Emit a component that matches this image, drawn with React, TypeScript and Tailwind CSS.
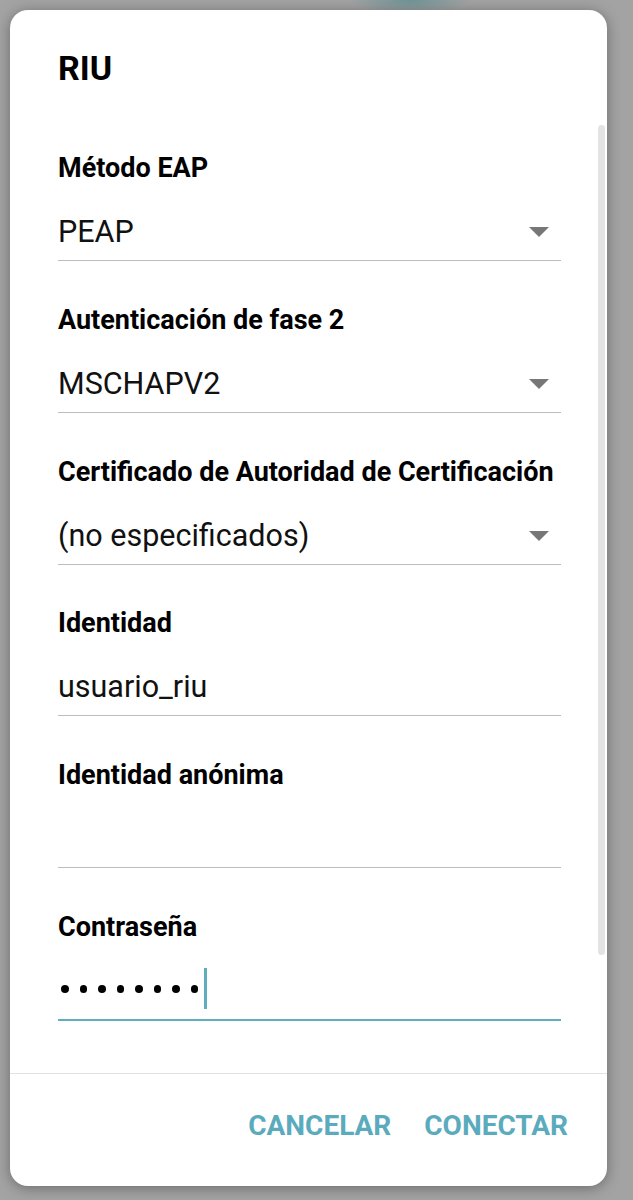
// Diálogo de conexión Wi-Fi EAP (RIU)
const font = { fontFamily: 'Roboto, "Noto Sans", sans-serif' };

type FieldProps = {
  label: string;
  value?: string;
  dropdown?: boolean;
};

function Caret() {
  return (
    <svg width="20" height="10" viewBox="0 0 20 10" className="shrink-0">
      <path d="M0 0h20L10 10z" fill="#777" />
    </svg>
  );
}

function Field({ label, value, dropdown }: FieldProps) {
  return (
    <div className="border-b border-[#bdbdbd]">
      <div className="h-[32px] text-[27px] leading-[32px] font-bold text-black">{label}</div>
      <div className="mt-[28px] mb-[8px] flex h-[40px] items-center justify-between">
        <span className="text-[30.5px] leading-[40px] text-[#111]">{value}</span>
        {dropdown && (
          <span className="mr-[12px]">
            <Caret />
          </span>
        )}
      </div>
    </div>
  );
}

function PasswordField() {
  return (
    <div className="border-b-2 border-[#5eaebf]">
      <div className="h-[32px] text-[27px] leading-[32px] font-bold text-black">Contraseña</div>
      <div className="mt-[25px] mb-[9px] flex h-[42px] items-center pl-[3px]">
        <div className="flex items-center gap-[11px]">
          {Array.from({ length: 8 }).map((_, i) => (
            <span key={i} className="h-[8px] w-[7.5px] rounded-full bg-black" />
          ))}
        </div>
        <span className="ml-[6px] h-[41px] w-[3px] bg-[#5eaebf]" />
      </div>
    </div>
  );
}

export default function App() {
  return (
    <div
      className="h-[1200px] w-[633px] overflow-hidden bg-[#a3a3a3] bg-[radial-gradient(ellipse_60px_14px_at_410px_0px,#6f9498,transparent)] pl-[10px] pt-[10px]"
      style={font}
    >
      <div className="relative flex h-[1176px] w-[597px] flex-col rounded-[18px] bg-white shadow-[0_2px_14px_rgba(0,0,0,0.35)]">
        {/* barra de desplazamiento */}
        <div className="absolute right-[2px] top-[115px] h-[830px] w-[7px] rounded-full bg-[#e3e3e3]" />

        <div className="flex-1 pl-[48px] pr-[46px] pt-[37px]">
          <div className="h-[42px] text-[34px] leading-[42px] font-bold text-black">RIU</div>
          <div className="mt-[63px] flex flex-col gap-[42.8px]">
            <Field label="Método EAP" value="PEAP" dropdown />
            <Field label="Autenticación de fase 2" value="MSCHAPV2" dropdown />
            <Field label="Certificado de Autoridad de Certificación" value="(no especificados)" dropdown />
            <Field label="Identidad" value="usuario_riu" />
            <Field label="Identidad anónima" value="" />
            <PasswordField />
          </div>
        </div>

        <div className="flex h-[113px] items-center justify-end gap-[33px] border-t border-[#e2e2e2] pb-[8px] pr-[39px]">
          <button className="text-[28px] font-bold text-[#5aabbd]">CANCELAR</button>
          <button className="text-[28px] font-bold text-[#5aabbd]">CONECTAR</button>
        </div>
      </div>
    </div>
  );
}
